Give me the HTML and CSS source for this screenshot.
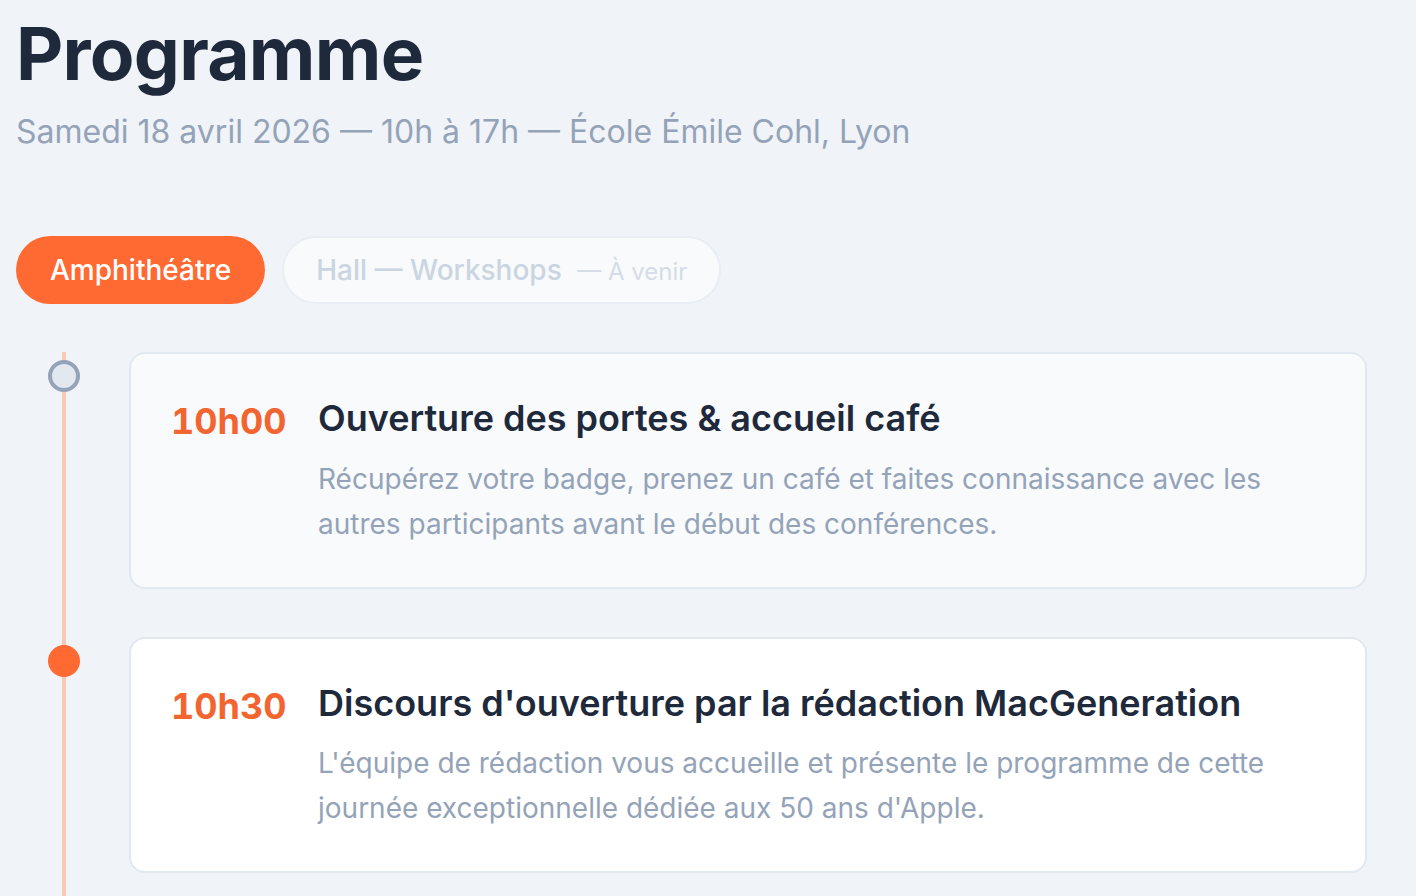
FILE: index.html
```html
<!DOCTYPE html>
<html lang="fr">
<head>
    <meta charset="UTF-8">
    <meta name="viewport" content="width=device-width, initial-scale=1.0">
    <title>Programme</title>
    <link rel="stylesheet" href="styles.css">
</head>
<body>
    <header class="page-header">
        <h1 class="page-title">Programme</h1>
        <p class="page-subtitle">Samedi 18 avril 2026 — 10h à 17h — École Émile Cohl, Lyon</p>
    </header>

    <nav class="tabs">
        <button class="tab active">Amphithéâtre</button>
        <button class="tab disabled">Hall — Workshops <span class="tab-note">— À venir</span></button>
    </nav>

    <div class="timeline">
        <div class="timeline-item">
            <span class="dot past"></span>
            <div class="session past">
                <div class="session-time">10h00</div>
                <div class="session-body">
                    <h2 class="session-title">Ouverture des portes &amp; accueil café</h2>
                    <p class="session-desc">Récupérez votre badge, prenez un café et faites connaissance avec les autres participants avant le début des conférences.</p>
                </div>
            </div>
        </div>

        <div class="timeline-item">
            <span class="dot current"></span>
            <div class="session">
                <div class="session-time">10h30</div>
                <div class="session-body">
                    <h2 class="session-title">Discours d'ouverture par la rédaction MacGeneration</h2>
                    <p class="session-desc">L'équipe de rédaction vous accueille et présente le programme de cette journée exceptionnelle dédiée aux 50 ans d'Apple.</p>
                </div>
            </div>
        </div>
    </div>
</body>
</html>
```

FILE: styles.css
```css
body {
    margin: 0;
    padding: 14px 49px 0 16px;
    background-color: #f0f4f8;
    font-family: "Inter", "Noto Sans", sans-serif;
    color: #1e293b;
    overflow: hidden;
}
.page-title {
    margin: 0;
    font-size: 73px;
    font-weight: 700;
    line-height: 1.1;
    letter-spacing: -0.01em;
    color: #1e293b;
}
.page-subtitle {
    margin: 17px 0 0;
    font-size: 32px;
    line-height: 1.3;
    color: #94a3b8;
}
.tabs {
    display: flex;
    gap: 17px;
    margin-top: 83px;
}
.tab {
    height: 68px;
    padding: 0 32px;
    border: 2px solid transparent;
    border-radius: 34px;
    font-family: inherit;
    font-size: 28px;
    font-weight: 500;
    cursor: pointer;
}
.tab.active {
    background-color: #ff6a33;
    color: #fff;
}
.tab.disabled {
    background-color: #f8fafc;
    border-color: #e9eef4;
    color: #cbd5e1;
    cursor: default;
}
.tab-note {
    margin-left: 8px;
    font-size: 24px;
    font-weight: 400;
    color: #d5dce5;
}
.timeline {
    position: relative;
    display: flex;
    flex-direction: column;
    gap: 48px;
    margin-top: 48px;
    padding-bottom: 60px;
}
.timeline::before {
    content: "";
    position: absolute;
    top: 0;
    bottom: 0;
    left: 46px;
    width: 4px;
    background-color: #f8c7b6;
}
.timeline-item {
    display: flex;
    align-items: flex-start;
}
.dot {
    position: relative;
    flex: none;
    width: 32px;
    height: 32px;
    margin: 8px 49px 0 32px;
    border-radius: 50%;
    box-sizing: border-box;
}
.dot.past {
    background-color: #e2e8f0;
    border: 4px solid #94a3b8;
}
.dot.current {
    background-color: #ff6a33;
}
.session {
    flex: 1;
    display: flex;
    gap: 32px;
    padding: 41px 40px 40px;
    border: 2px solid #e2e8f0;
    border-radius: 16px;
    background-color: #fff;
}
.session.past {
    background-color: #f8fafc;
}
.session-time {
    flex: none;
    width: 115px;
    padding-top: 3px;
    font-size: 36px;
    font-weight: 700;
    line-height: 1.3;
    font-variant-numeric: tabular-nums;
    white-space: nowrap;
    color: #f26530;
}
.session-title {
    margin: 0;
    font-size: 36px;
    font-weight: 600;
    line-height: 1.3;
    color: #1e293b;
}
.session-desc {
    margin: 15px 0 0;
    font-size: 28px;
    line-height: 45px;
    color: #94a3b8;
}
```
